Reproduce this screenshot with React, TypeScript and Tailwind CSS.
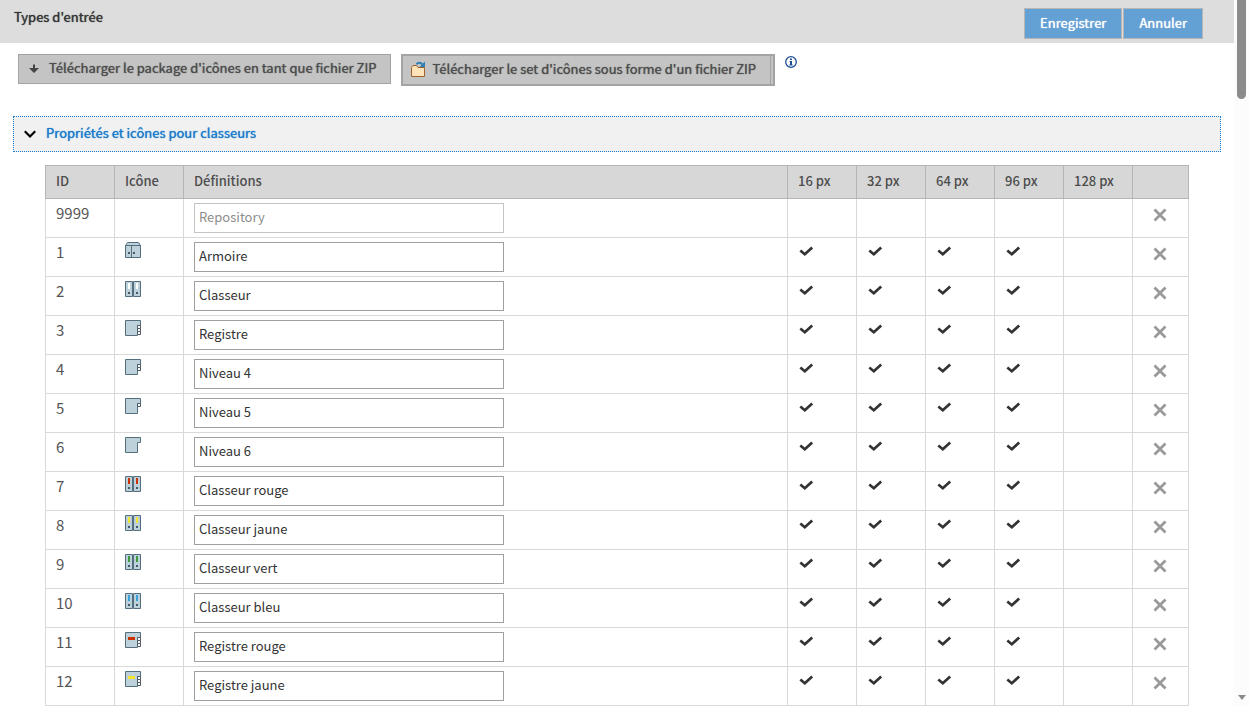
import { useState } from "react"

type IconKind = "cabinet" | "binder" | "register"

interface EntryType {
  id: number
  name: string
  icon?: IconKind
  color?: string
  tabs?: number
  locked?: boolean
}

const SIZES = [16, 32, 64, 96, 128]
const AVAILABLE = [16, 32, 64, 96]

const ENTRIES: EntryType[] = [
  { id: 9999, name: "Repository", locked: true },
  { id: 1, name: "Armoire", icon: "cabinet" },
  { id: 2, name: "Classeur", icon: "binder", color: "#ffffff" },
  { id: 3, name: "Registre", icon: "register", tabs: 3 },
  { id: 4, name: "Niveau 4", icon: "register", tabs: 2 },
  { id: 5, name: "Niveau 5", icon: "register", tabs: 1 },
  { id: 6, name: "Niveau 6", icon: "register", tabs: 0 },
  { id: 7, name: "Classeur rouge", icon: "binder", color: "#cc3300" },
  { id: 8, name: "Classeur jaune", icon: "binder", color: "#f5e532" },
  { id: 9, name: "Classeur vert", icon: "binder", color: "#3d9c3d" },
  { id: 10, name: "Classeur bleu", icon: "binder", color: "#36a3dd" },
  { id: 11, name: "Registre rouge", icon: "register", color: "#cc3300", tabs: 3 },
  { id: 12, name: "Registre jaune", icon: "register", color: "#f5e532", tabs: 3 },
]

function EntryIcon({ icon, color, tabs = 0 }: EntryType) {
  if (icon === "cabinet") {
    return (
      <svg className="block h-4 w-4" viewBox="0 0 16 16" fill="none">
        <path d="M2.5 .5h11l2 3v12H.5v-12z" fill="#bcd1da" stroke="#546e7e" />
        <path d="M.5 3.5h15M6.5 3.5v12" stroke="#546e7e" />
        <path d="M3 10h2v2H3zM8 10h2v2H8z" fill="#455a66" />
      </svg>
    )
  }
  if (icon === "binder") {
    return (
      <svg className="block h-4 w-4" viewBox="0 0 16 16" fill="none">
        <path d="M.5 .5h7v15h-7zM8.5 .5h7v15h-7z" fill="#bcd1da" stroke="#546e7e" />
        <path d="M3 2h2v6H3zM11 2h2v6h-2z" fill={color} />
        <path d="M3 11h2v2H3zM11 11h2v2h-2z" fill="#455a66" />
      </svg>
    )
  }
  return (
    <svg className="block h-4 w-4" viewBox="0 0 16 16" fill="none">
      <path d="M.5 .5h15v5h-3v10H.5z" fill="#bcd1da" stroke="#546e7e" />
      {tabs > 0 && <path d="M12.5 5.5h3v3h-3z" fill="#fff" stroke="#4d5a63" />}
      {tabs > 1 && <path d="M12.5 8.5h3v3h-3z" fill="#fff" stroke="#4d5a63" />}
      {tabs > 2 && <path d="M12.5 11.5h3v3h-3z" fill="#fff" stroke="#4d5a63" />}
      {color && <path d="M3 5h7v3H3z" fill={color} />}
    </svg>
  )
}

function CheckMark() {
  return (
    <svg className="block h-3 w-4" viewBox="0 0 16 12" fill="none">
      <path d="M2.3 4.5L6.8 8.2L14.2 1.5" stroke="#333" strokeWidth="2.7" />
    </svg>
  )
}

function DeleteButton({ name }: { name: string }) {
  return (
    <button className="block" aria-label={`Supprimer ${name}`}>
      <svg className="block h-4 w-4" viewBox="0 0 16 16" fill="none">
        <path d="M1.5 2.5l11 11M12.5 2.5l-11 11" stroke="#999" strokeWidth="2.8" />
      </svg>
    </button>
  )
}

function EntryRow({ entry }: { entry: EntryType }) {
  const [name, setName] = useState(entry.name)
  const cell = "border border-[#d9d9d9] px-2.5 align-top"

  return (
    <tr className="h-[39px]">
      <td className={`${cell} pt-1 text-[15px] leading-5 text-[#555]`}>{entry.id}</td>
      <td className={`${cell} pt-1`}>{entry.icon && <EntryIcon {...entry} />}</td>
      <td className={`${cell} py-1`}>
        <input
          type="text"
          aria-label={`Définition ${entry.id}`}
          value={name}
          disabled={entry.locked}
          onChange={(e) => setName(e.target.value)}
          className="block h-[30px] w-[310px] border border-[#a0a0a0] bg-white px-1 pb-1 text-[13px] text-[#333] disabled:border-[#c4c4c4] disabled:text-[#8c8c8c]"
        />
      </td>
      {SIZES.map((size) => (
        <td key={size} className={`${cell} pt-2`}>
          {entry.icon && AVAILABLE.includes(size) && <CheckMark />}
        </td>
      ))}
      <td className="border border-[#d9d9d9] px-5 pt-2 align-top">
        <DeleteButton name={entry.name} />
      </td>
    </tr>
  )
}

export default function App() {
  const [open, setOpen] = useState(true)
  const th = "border border-[#b5b5b5] px-2.5 pb-0.5 text-left font-medium"
  const strong = "[text-shadow:0_0_1px_currentColor]"
  const action = `h-[31px] border border-[#b5b5b5] bg-[#63a0d4] px-[15px] pb-0.5 ${strong}`

  return (
    <div className="flex h-screen bg-white font-['Noto_Sans_CJK_SC',sans-serif] text-[13px] leading-5 text-[#333]">
      <main className="min-w-0 flex-1 overflow-hidden">
        {/* Title bar */}
        <header className="flex h-[43px] items-start justify-between bg-[#ddd] pr-[31px] pl-3.5">
          <h1 className={`pt-[7px] ${strong}`}>Types d'entrée</h1>
          <div className="flex gap-px pt-2 text-white">
            <button className={action}>Enregistrer</button>
            <button className={action}>Annuler</button>
          </div>
        </header>

        {/* Downloads */}
        <div className="flex items-start gap-2.5 px-[18px] pt-[11px] text-[#4d4d4d]">
          <button className={`flex h-[30px] items-center gap-2.5 border border-[#a3a3a3] bg-[#c4c4c4] pr-3.5 pb-0.5 pl-2.5 ${strong}`}>
            <svg className="h-2.5 w-2.5" viewBox="0 0 10 10">
              <path d="M4 1.500h2V5h4L5 10L0 5h4z" fill="#444" />
            </svg>
            Télécharger le package d'icônes en tant que fichier ZIP
          </button>
          <button className={`flex h-8 border-2 border-[#a3a3a3] bg-[#c4c4c4] pr-0.5 ${strong}`}>
            <span className="flex h-full items-center gap-[5px] border-r border-[#a3a3a3] pr-3.5 pb-0.5 pl-2">
              <svg className="h-4 w-4" viewBox="0 0 16 16" fill="none">
                <path d="M.5 15.5V6.5l1.500-2h3.500l1.500 2h6.500v9z" fill="#ffe3b8" stroke="#a0622d" />
                <path d="M5.5 3.3C7 1.2 9.500 1.2 11.500 3.500" stroke="#2f7fb5" strokeWidth="2" />
                <path d="M14 .5v5.500H8.500z" fill="#2f7fb5" />
              </svg>
              Télécharger le set d'icônes sous forme d'un fichier ZIP
            </span>
          </button>
          <svg className="mt-0.5 h-3 w-3" viewBox="0 0 12 12" fill="none">
            <circle cx="6" cy="6" r="5.3" stroke="#1d5096" strokeWidth="1.3" />
            <path d="M5 2.500h2v1.500H5zM4.500 5H7v3.500h.7v1H4.300v-1H5V6h-.5z" fill="#1d5096" />
          </svg>
        </div>

        {/* Folder types */}
        <section className="px-[13px] pt-[30px]">
          <button
            onClick={() => setOpen(!open)}
            aria-expanded={open}
            className={`flex h-9 w-full items-center gap-2.5 border border-dotted border-[#1a7acb] bg-[#f1f1f1] pb-0.5 pl-2.5 text-[#1a7acb] ${strong}`}
          >
            <svg className="h-3 w-3" viewBox="0 0 12 12" fill="none">
              <path d="M.8 4.300L6 9.500L11.200 4.300" stroke="#000" strokeWidth="2.2" />
            </svg>
            Propriétés et icônes pour classeurs
          </button>

          {open && (
            <div className="px-8 pt-[13px]">
              <table className="w-full table-fixed border-collapse">
                <thead>
                  <tr className="h-[33px] bg-[#d7d7d7] text-[#4d4d4d]">
                    <th className={`${th} w-[69px]`}>ID</th>
                    <th className={`${th} w-[69px]`}>Icône</th>
                    <th className={th}>Définitions</th>
                    {SIZES.map((size) => (
                      <th key={size} className={`${th} w-[69px]`}>{size} px</th>
                    ))}
                    <th className={`${th} w-14`} aria-label="Supprimer" />
                  </tr>
                </thead>
                <tbody>
                  {ENTRIES.map((entry) => (
                    <EntryRow key={entry.id} entry={entry} />
                  ))}
                </tbody>
              </table>
            </div>
          )}
        </section>
      </main>

      {/* Scrollbar */}
      <div className="flex w-[15px] flex-col items-center justify-between bg-[#fcfcfc] pb-1.5" aria-hidden="true">
        <div className="h-[99px] w-[9px] rounded-b-full bg-[#8b8b8b]" />
        <svg className="h-[5px] w-2" viewBox="0 0 8 5">
          <path d="M0 0h8L4 5z" fill="#8b8b8b" />
        </svg>
      </div>
    </div>
  )
}
